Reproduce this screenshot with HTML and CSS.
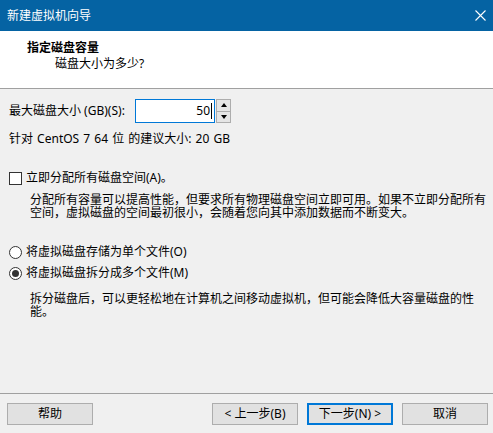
FILE: index.html
```html
<!DOCTYPE html>
<html lang="zh-CN">
<head>
<meta charset="utf-8">
<title>新建虚拟机向导</title>
<link rel="stylesheet" href="styles.css">
</head>
<body>
<div class="titlebar">
  <span class="title">新建虚拟机向导</span>
  <svg class="close" viewBox="0 0 11 11" width="11" height="11"><path d="M0.5 0.5 L10.5 10.5 M10.5 0.5 L0.5 10.5" stroke="#fff" stroke-width="1.1" fill="none"/></svg>
</div>
<div class="header">
  <div class="h-title">指定磁盘容量</div>
  <div class="h-sub">磁盘大小为多少?</div>
</div>
<div class="content">
  <div class="spin-row">
    <span class="spin-label">最大磁盘大小 (GB)(S):</span>
    <div class="spin-input"><span class="val">50</span><span class="caret"></span></div>
    <div class="spin-btns">
      <div class="spin-btn"><span class="tri-up"></span></div>
      <div class="spin-btn"><span class="tri-down"></span></div>
    </div>
  </div>
  <div class="rec">针对 CentOS 7 64 位 的建议大小: 20 GB</div>
  <div class="opt check-row"><span class="checkbox"></span><span>立即分配所有磁盘空间(A)。</span></div>
  <div class="desc desc1">分配所有容量可以提高性能，但要求所有物理磁盘空间立即可用。如果不立即分配所有<br>空间，虚拟磁盘的空间最初很小，会随着您向其中添加数据而不断变大。</div>
  <div class="opt radio-row1"><span class="radio"></span><span>将虚拟磁盘存储为单个文件(O)</span></div>
  <div class="opt radio-row2"><span class="radio checked"></span><span>将虚拟磁盘拆分成多个文件(M)</span></div>
  <div class="desc desc2">拆分磁盘后，可以更轻松地在计算机之间移动虚拟机，但可能会降低大容量磁盘的性<br>能。</div>
</div>
<div class="footer">
  <div class="btn">帮助</div>
  <div class="btn btn-prev">&lt; 上一步(B)</div>
  <div class="btn btn-next">下一步(N) &gt;</div>
  <div class="btn">取消</div>
</div>
</body>
</html>
```
FILE: styles.css
```css
* { box-sizing: border-box; margin: 0; padding: 0; }
html, body { width: 493px; height: 433px; overflow: hidden; }
body {
  background: #f0f0f0;
  font-family: "Noto Sans", "Noto Sans CJK SC", sans-serif;
  font-size: 12px;
  color: #000;
  display: flex;
  flex-direction: column;
}
.titlebar {
  flex: none;
  height: 31px;
  background: #0563a3;
  color: #fff;
  display: flex;
  align-items: center;
  justify-content: space-between;
  padding: 0 7px 0 7px;
  line-height: 16px;
}
.close { display: block; }
.header {
  flex: none;
  height: 58px;
  background: #fff;
  border-bottom: 1px solid #a0a0a0;
  padding: 9px 0 0 27px;
  line-height: 16px;
}
.h-title { font-weight: bold; }
.h-sub { padding-left: 28px; }
.content {
  flex: 1;
  padding: 10px 0 0 9px;
  display: flex;
  flex-direction: column;
}
.spin-row { display: flex; align-items: center; height: 24px; }
.spin-label { width: 126px; line-height: 16px; }
.spin-input {
  width: 80px;
  height: 24px;
  background: #fff;
  border: 1px solid #0078d7;
  display: flex;
  align-items: center;
  justify-content: flex-end;
  padding-right: 2px;
}
.val { line-height: 16px; }
.caret { width: 1px; height: 16px; background: #000; margin-left: 1px; }
.spin-btns {
  margin-left: 1px;
  width: 15px;
  height: 24px;
  display: flex;
  flex-direction: column;
}
.spin-btn {
  flex: 1;
  background: #e5e5e5;
  border: 1px solid #adadad;
  display: flex;
  align-items: center;
  justify-content: center;
}
.spin-btn + .spin-btn { border-top: none; }
.tri-up { width: 0; height: 0; border-left: 3.5px solid transparent; border-right: 3.5px solid transparent; border-bottom: 4px solid #000; }
.tri-down { width: 0; height: 0; border-left: 3.5px solid transparent; border-right: 3.5px solid transparent; border-top: 4px solid #000; }
.rec { margin-top: 8px; line-height: 16px; word-spacing: 1px; }
.opt { display: flex; align-items: center; line-height: 16px; gap: 4px; }
.check-row { margin-top: 23px; }
.checkbox {
  width: 13px; height: 13px;
  background: #fff;
  border: 1px solid #333;
  flex: none;
}
.radio {
  width: 13px; height: 13px;
  border-radius: 50%;
  background: #fff;
  border: 1px solid #333;
  flex: none;
  display: flex;
  align-items: center;
  justify-content: center;
}
.radio.checked::after {
  content: "";
  width: 7px; height: 7px;
  border-radius: 50%;
  background: #333;
}
.desc { padding-left: 21px; line-height: 13px; white-space: nowrap; }
.desc1 { margin-top: 7px; }
.radio-row1 { margin-top: 25px; }
.radio-row2 { margin-top: 5px; }
.desc2 { margin-top: 11px; }
.footer {
  flex: none;
  border-top: 1px solid #a0a0a0;
  padding: 9px 5px 8px 7px;
  display: flex;
  gap: 9px;
}
.btn {
  width: 86px;
  height: 22px;
  background: #e1e1e1;
  border: 1px solid #adadad;
  display: flex;
  align-items: center;
  justify-content: center;
  line-height: 16px;
}
.btn-prev { margin-left: auto; }
.btn-next { border: 2px solid #0078d7; }
```
